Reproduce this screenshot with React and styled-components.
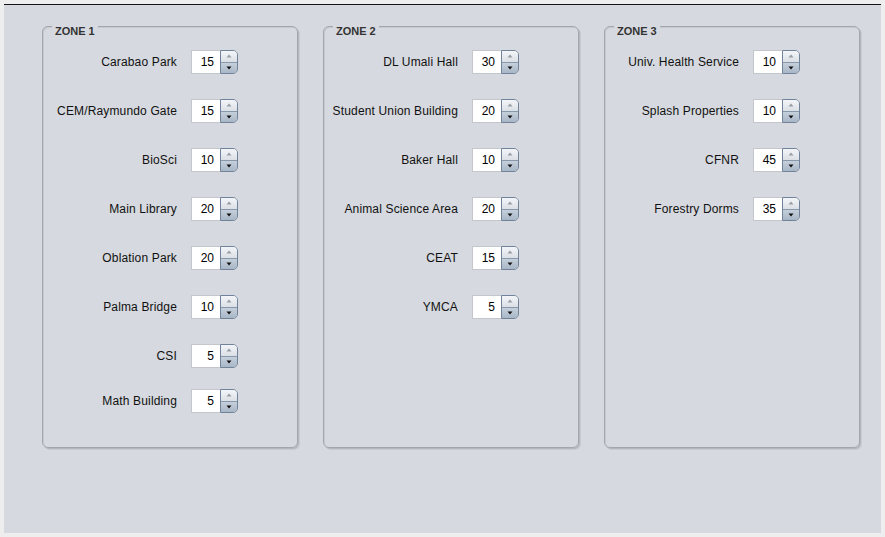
import React, { useState } from 'react';
import styled, { createGlobalStyle } from 'styled-components';

const zones = [
  {
    title: 'ZONE 1',
    stops: [
      ['Carabao Park', 15],
      ['CEM/Raymundo Gate', 15],
      ['BioSci', 10],
      ['Main Library', 20],
      ['Oblation Park', 20],
      ['Palma Bridge', 10],
      ['CSI', 5],
      ['Math Building', 5],
    ],
  },
  {
    title: 'ZONE 2',
    stops: [
      ['DL Umali Hall', 30],
      ['Student Union Building', 20],
      ['Baker Hall', 10],
      ['Animal Science Area', 20],
      ['CEAT', 15],
      ['YMCA', 5],
    ],
  },
  {
    title: 'ZONE 3',
    stops: [
      ['Univ. Health Service', 10],
      ['Splash Properties', 10],
      ['CFNR', 45],
      ['Forestry Dorms', 35],
    ],
  },
];

const Spinner = ({ initial }) => {
  const [value, setValue] = useState(initial);

  return (
    <SpinBox>
      <SpinField
        value={value}
        onChange={(e) => setValue(e.target.value.replace(/\D/g, ''))}
      />
      <SpinButtons>
        <SpinUp onClick={() => setValue((v) => Number(v) + 1)}>
          <svg width='6' height='4' viewBox='0 0 6 4'>
            <path d='M0.5 3.5 L3 0.5 L5.5 3.5 Z' fill='#979ea6' />
          </svg>
        </SpinUp>
        <SpinDown onClick={() => setValue((v) => Math.max(0, Number(v) - 1))}>
          <svg width='6' height='4' viewBox='0 0 6 4'>
            <path d='M0.5 0.5 L5.5 0.5 L3 3.5 Z' fill='#111' />
          </svg>
        </SpinDown>
      </SpinButtons>
    </SpinBox>
  );
};

const App = () => {
  return (
    <>
      <GlobalStyle />
      <Frame>
        {zones.map((zone) => (
          <ZoneBox key={zone.title}>
            <ZoneTitle>{zone.title}</ZoneTitle>
            {zone.stops.map(([name, minutes], i) => (
              <Row key={name} $last={i === 7}>
                <Label>{name}</Label>
                <Spinner initial={minutes} />
              </Row>
            ))}
          </ZoneBox>
        ))}
      </Frame>
    </>
  );
};

const GlobalStyle = createGlobalStyle`
  body {
    margin: 0;
    background: #eeeeee;
    font-family: "Liberation Sans", Arial, sans-serif;
  }
`;

const Frame = styled.div`
  margin: 4px;
  height: 529px;
  box-sizing: border-box;
  border-top: 1px solid #141418;
  background: #d6d9df;
  padding: 21px 0 0 38px;
  display: flex;
  align-items: flex-start;
  gap: 25px;
`;

const ZoneBox = styled.div`
  position: relative;
  width: 256px;
  height: 422px;
  box-sizing: border-box;
  border: 1px solid #a3a7ad;
  border-radius: 6px;
  box-shadow: inset 1px 1px 0 #c6c9ce, 1px 1px 0 #b4b7bd, 2px 2px 0 #c8cbd0;
  padding-top: 23px;
  display: flex;
  flex-direction: column;
  gap: 25px;
`;

const ZoneTitle = styled.span`
  position: absolute;
  top: -2px;
  left: 9px;
  padding: 0 3px;
  background: #d6d9df;
  font-size: 11px;
  line-height: 13px;
  font-weight: bold;
  color: #333333;
`;

const Row = styled.div`
  display: flex;
  align-items: center;
  height: 24px;
  margin-top: ${(p) => (p.$last ? '-4px' : '0')};
`;

const Label = styled.span`
  width: 134px;
  margin-right: 14px;
  text-align: right;
  font-size: 12px;
  letter-spacing: 0.15px;
  color: #111111;
  white-space: nowrap;
`;

const SpinBox = styled.div`
  display: flex;
  height: 24px;
`;

const SpinField = styled.input`
  width: 29px;
  height: 24px;
  box-sizing: border-box;
  border: 1px solid #c3c6cb;
  border-right: none;
  padding: 0 6px 0 0;
  margin: 0;
  background: #ffffff;
  text-align: right;
  font-family: "Liberation Sans", Arial, sans-serif;
  font-size: 12px;
  color: #000000;
  outline: none;
`;

const SpinButtons = styled.div`
  width: 18px;
  height: 24px;
  box-sizing: border-box;
  border: 1px solid #71839a;
  border-radius: 0 5px 5px 0;
  overflow: hidden;
  display: flex;
  flex-direction: column;
`;

const SpinUp = styled.div`
  flex: 1;
  display: flex;
  align-items: center;
  justify-content: center;
  background: linear-gradient(#f3f5f8, #dbe0e6);
  border-bottom: 1px solid #8898ab;
  cursor: pointer;
`;

const SpinDown = styled.div`
  flex: 1;
  display: flex;
  align-items: center;
  justify-content: center;
  background: linear-gradient(#c6d0dc, #a8b6c6);
  cursor: pointer;
`;

export default App;
